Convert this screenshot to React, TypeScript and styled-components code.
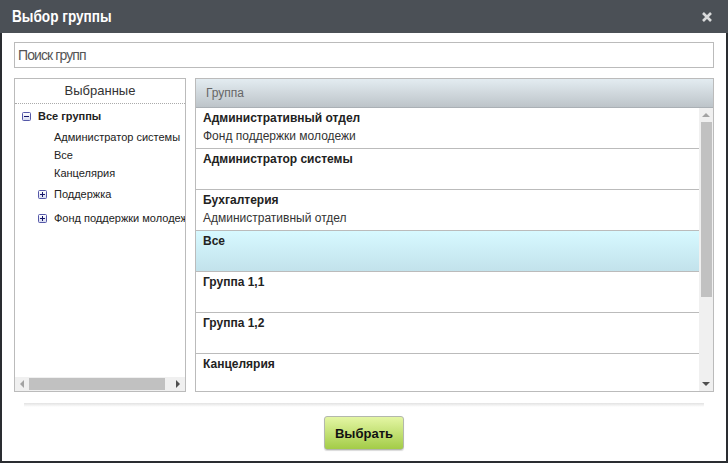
import React from 'react';
import styled, { createGlobalStyle } from 'styled-components';

const GlobalStyle = createGlobalStyle`
  html, body {
    margin: 0;
    padding: 0;
    background: #fff;
  }
  body {
    font-family: "Liberation Sans", Arial, sans-serif;
  }
`;

const leftTree = [
  { name: 'Поддержка' },
  { name: 'Фонд поддержки молодежи' },
];

const rootLeaves = ['Администратор системы', 'Все', 'Канцелярия'];

const groups = [
  { title: 'Административный отдел', parent: 'Фонд поддержки молодежи' },
  { title: 'Администратор системы', parent: '' },
  { title: 'Бухгалтерия', parent: 'Административный отдел' },
  { title: 'Все', parent: '', selected: true },
  { title: 'Группа 1,1', parent: '' },
  { title: 'Группа 1,2', parent: '' },
  { title: 'Канцелярия', parent: '' },
];

function ToggleIcon({ open }: { open: boolean }) {
  return (
    <IconSvg width='9' height='9' viewBox='0 0 9 9'>
      <defs>
        <linearGradient id='tg' x1='0' y1='0' x2='0' y2='1'>
          <stop offset='0' stopColor='#ffffff' />
          <stop offset='1' stopColor='#d6dbf0' />
        </linearGradient>
      </defs>
      <rect x='0.5' y='0.5' width='8' height='8' fill='url(#tg)' stroke='#5558a8' rx='1' />
      <line x1='2' y1='4.5' x2='7' y2='4.5' stroke='#15166a' />
      {!open && <line x1='4.5' y1='2' x2='4.5' y2='7' stroke='#15166a' />}
    </IconSvg>
  );
}

export default function App() {
  return (
    <Dialog>
      <GlobalStyle />
      <Header>
        <Title>Выбор группы</Title>
        <Close aria-label='close'>
          <svg width='10' height='10' viewBox='0 0 10 10'>
            <path d='M1 1 L9 9 M9 1 L1 9' stroke='#d9dadb' strokeWidth='2.6' />
          </svg>
        </Close>
      </Header>
      <Body>
        <Search placeholder='Поиск групп' />
        <Panels>
          {/* выбранные */}
          <LeftPanel>
            <LeftHead>Выбранные</LeftHead>
            <Tree>
              <Node>
                <ToggleIcon open />
                <NodeLabel $bold>Все группы</NodeLabel>
              </Node>
              <Children>
                {rootLeaves.map((l) => (
                  <Leaf key={l}>{l}</Leaf>
                ))}
                {leftTree.map((n) => (
                  <Node key={n.name}>
                    <ToggleIcon open={false} />
                    <NodeLabel>{n.name}</NodeLabel>
                  </Node>
                ))}
              </Children>
            </Tree>
            <HScroll>
              <ArrowBox>
                <Arrow $dir='left' $dark={false} />
              </ArrowBox>
              <HThumb />
              <Spacer />
              <ArrowBox>
                <Arrow $dir='right' $dark />
              </ArrowBox>
            </HScroll>
          </LeftPanel>

          {/* список групп */}
          <RightPanel>
            <GridHead>Группа</GridHead>
            <GridBody>
              <Rows>
                {groups.map((g) => (
                  <Row key={g.title} $selected={!!g.selected}>
                    <RowTitle>{g.title}</RowTitle>
                    <RowSub>{g.parent}</RowSub>
                  </Row>
                ))}
              </Rows>
              <VScroll>
                <ArrowBox>
                  <Arrow $dir='up' $dark={false} />
                </ArrowBox>
                <VThumb />
                <Spacer />
                <ArrowBox>
                  <Arrow $dir='down' $dark />
                </ArrowBox>
              </VScroll>
            </GridBody>
          </RightPanel>
        </Panels>
        <Separator />
        <Footer>
          <SelectButton>Выбрать</SelectButton>
        </Footer>
      </Body>
    </Dialog>
  );
}

const IconSvg = styled.svg`
  flex: none;
  display: block;
`;

const Dialog = styled.div`
  width: 728px;
  height: 463px;
  display: flex;
  flex-direction: column;
  box-sizing: border-box;
`;

const Header = styled.div`
  height: 33px;
  flex: none;
  background: #4b5056;
  display: flex;
  align-items: center;
  justify-content: space-between;
  padding: 0 16px 0 12px;
`;

// narrow font is not installed, so squeeze the regular one
const Title = styled.h1`
  margin: 0;
  font: bold 16px "Liberation Sans Narrow", "Liberation Sans", Arial, sans-serif;
  color: #fff;
  transform: scaleX(0.85);
  transform-origin: left center;
`;

const Close = styled.button`
  border: 0;
  padding: 0;
  background: transparent;
  width: 10px;
  height: 10px;
  display: flex;
`;

const Body = styled.div`
  flex: 1;
  border: 2px solid #2a2d31;
  border-top: none;
  padding: 9px 12px 0;
  display: flex;
  flex-direction: column;
`;

const Search = styled.input`
  height: 26px;
  box-sizing: border-box;
  border: 1px solid #bbb;
  padding: 0 3px;
  margin: 0;
  outline: none;
  font: 14px "Liberation Sans Narrow", "Liberation Sans", Arial, sans-serif;
  letter-spacing: -0.9px;
  color: #333;
  &::placeholder {
    color: #555;
  }
`;

const Panels = styled.div`
  display: flex;
  gap: 9px;
  margin-top: 10px;
  height: 314px;
`;

const LeftPanel = styled.div`
  width: 172px;
  box-sizing: border-box;
  border: 1px solid #bbb;
  display: flex;
  flex-direction: column;
`;

const LeftHead = styled.div`
  height: 24px;
  line-height: 24px;
  flex: none;
  border-bottom: 1px dotted #aaa;
  text-align: center;
  font-size: 13px;
  color: #333;
`;

const Tree = styled.div`
  flex: 1;
  overflow: hidden;
  padding-left: 7px;
  font-size: 11px;
  color: #222;
`;

const Node = styled.div`
  height: 24px;
  display: flex;
  align-items: center;
  gap: 7px;
  white-space: nowrap;
`;

const NodeLabel = styled.span<{ $bold?: boolean }>`
  font-weight: ${(p) => (p.$bold ? 'bold' : 'normal')};
`;

const Children = styled.div`
  padding-left: 16px;
`;

const Leaf = styled.div`
  height: 18px;
  line-height: 18px;
  padding-left: 16px;
  white-space: nowrap;
`;

const HScroll = styled.div`
  height: 14px;
  flex: none;
  display: flex;
  background: #f0f0f0;
`;

const VScroll = styled.div`
  width: 14px;
  flex: none;
  display: flex;
  flex-direction: column;
  background: #f0f0f0;
`;

const ArrowBox = styled.div`
  width: 14px;
  height: 14px;
  flex: none;
  display: flex;
  align-items: center;
  justify-content: center;
`;

const Arrow = styled.div<{ $dir: 'up' | 'down' | 'left' | 'right'; $dark: boolean }>`
  width: 0;
  height: 0;
  ${(p) => {
    const c = p.$dark ? '#505050' : '#a3a3a3';
    switch (p.$dir) {
      case 'up':
        return `border-left: 4px solid transparent; border-right: 4px solid transparent; border-bottom: 4px solid ${c};`;
      case 'down':
        return `border-left: 4px solid transparent; border-right: 4px solid transparent; border-top: 4px solid ${c};`;
      case 'left':
        return `border-top: 4px solid transparent; border-bottom: 4px solid transparent; border-right: 4px solid ${c};`;
      default:
        return `border-top: 4px solid transparent; border-bottom: 4px solid transparent; border-left: 4px solid ${c};`;
    }
  }}
`;

const HThumb = styled.div`
  width: 136px;
  margin: 1px 0;
  background: #c1c1c1;
`;

const VThumb = styled.div`
  height: 175px;
  margin: 0 1px 0 2px;
  background: #c1c1c1;
`;

const Spacer = styled.div`
  flex: 1;
`;

const RightPanel = styled.div`
  flex: 1;
  box-sizing: border-box;
  border: 1px solid #bbb;
  display: flex;
  flex-direction: column;
`;

const GridHead = styled.div`
  height: 28px;
  line-height: 28px;
  flex: none;
  border-bottom: 1px solid #aab0b5;
  background: linear-gradient(#e3ecf1, #bdc4c9);
  padding-left: 10px;
  font-size: 12px;
  color: #666;
`;

const GridBody = styled.div`
  flex: 1;
  display: flex;
  overflow: hidden;
`;

const Rows = styled.div`
  flex: 1;
  overflow: hidden;
`;

const Row = styled.div<{ $selected: boolean }>`
  height: 40px;
  border-bottom: 1px solid #bbb;
  padding: 1px 7px 0;
  box-sizing: border-box;
  height: 41px;
  font-size: 12px;
  line-height: 18px;
  background: ${(p) => (p.$selected ? 'linear-gradient(#d7f9ff, #c2e2eb)' : '#fff')};
`;

const RowTitle = styled.div`
  font-weight: bold;
  color: #222;
`;

const RowSub = styled.div`
  color: #333;
  min-height: 18px;
`;

const Separator = styled.div`
  height: 4px;
  margin: 11px 10px 0;
  background: linear-gradient(#e2e2e2, #fff);
`;

const Footer = styled.div`
  display: flex;
  justify-content: center;
  margin-top: 9px;
`;

const SelectButton = styled.button`
  width: 80px;
  height: 34px;
  border: 1px solid #b3b8ad;
  border-radius: 3px;
  background: linear-gradient(#e4f6a4, #a3cc47);
  font: bold 13px "Liberation Sans", Arial, sans-serif;
  color: #111;
  padding: 0;
  box-shadow: 0 1px 1px rgba(0, 0, 0, 0.15);
`;
